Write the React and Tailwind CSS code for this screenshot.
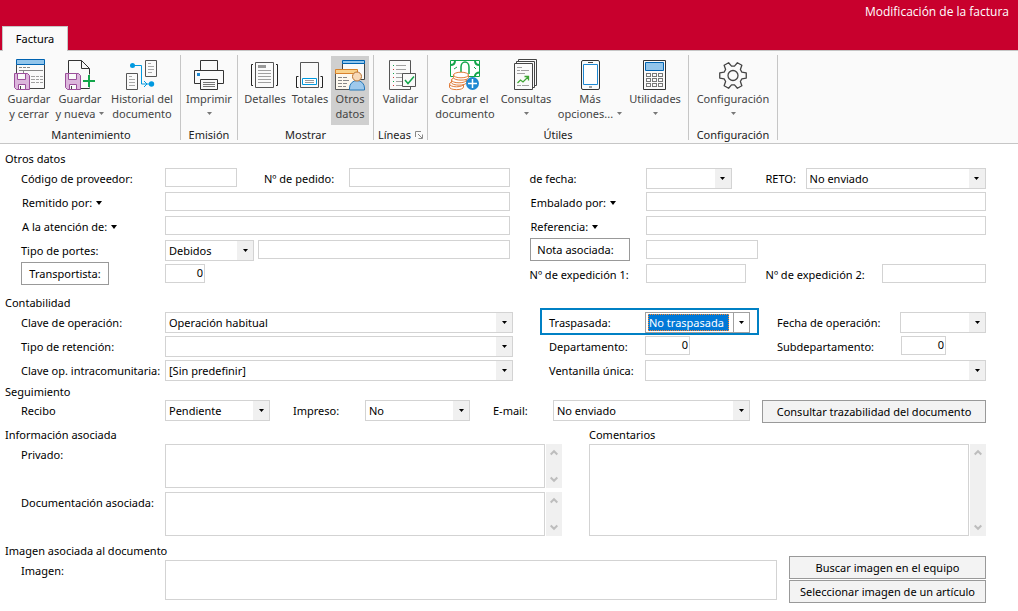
import { clsx } from 'clsx';

const FIELD = 'border border-[#d3d3d3] bg-white outline-none min-w-0';

/* ---------- Ribbon icons ---------- */

const Icon = ({ children }) => (
  <svg viewBox="0 0 32 32" fill="none" className="w-8 h-8 shrink-0" aria-hidden="true">
    {children}
  </svg>
);

const Floppy = () => (
  <>
    <path d="M1.5 14.5h13l2 2v14h-13l-2-2z" fill="#dcb6dc" stroke="#9b4f9b" />
    <path d="M4.5 14.5h8v6h-8z" fill="#fafafa" stroke="#9b4f9b" />
    <path d="M5.5 25.5h7v5h-7z" fill="#fafafa" stroke="#9b4f9b" />
    <path d="M7.5 27v3" stroke="#444" />
  </>
);

const SaveCloseIcon = () => (
  <Icon>
    <path d="M3.500 5.500h28v24h-28z" fill="#fafafa" stroke="#444" />
    <path d="M3.500 .5h28v5h-28z" fill="#92c5eb" stroke="#0063b1" />
    <path d="M6 8.500h3m1 0h3m1 0h3M6 11.500h24M10.500 12v3" stroke="#888" />
    <path d="M18 17.500h4m1 0h3m1 0h3M18 20.500h4m1 0h3m1 0h3M18 23.500h4m1 0h3m1 0h3" stroke="#a0a0a0" />
    <Floppy />
  </Icon>
);

const SaveNewIcon = () => (
  <Icon>
    <path d="M4.500 29.500v-28h13l8 8v20z" fill="#fafafa" stroke="#333" />
    <path d="M17.500 1.500v8h8" stroke="#333" />
    <Floppy />
    <path d="M25 15.500v13M18.500 22h13" stroke="#fafafa" strokeWidth="4" />
    <path d="M25 16v12M19 22h12" stroke="#12a54a" strokeWidth="2" />
  </Icon>
);

const HistoryIcon = () => (
  <Icon>
    <path d="M19.500 1.500h11v16h-11zM.5 14.500h11v16h-11z" fill="#fafafa" stroke="#555" />
    <path d="M22 4.500h3m-3 3h6m-6 3h6m-6 3h4M3 17.500h3m-3 3h6m-6 3h6m-6 3h6" stroke="#a8a8a8" />
    <path d="M6 6.500h9.500v18.500H20m-2-3l3 3-3 3M21 25h4" stroke="#0099e0" />
    <circle cx="6.500" cy="6.500" r="2.500" fill="#0099e0" />
    <circle cx="25.500" cy="25" r="2.700" fill="#0099e0" />
  </Icon>
);

const PrintIcon = () => (
  <Icon>
    <path d="M7.500 1.500h17v10h-17z" fill="#fafafa" stroke="#333" />
    <path d="M1.500 11.500h29v13h-29z" fill="#fafafa" stroke="#333" />
    <path d="M7.500 20.500h17v10h-17z" fill="#fafafa" stroke="#333" />
    <path d="M10 23.500h12m-12 2h12m-12 2h12" stroke="#777" />
    <path d="M4 14h3v3H4z" fill="#1e88d2" />
  </Icon>
);

const DetailsIcon = () => (
  <Icon>
    <path d="M6.500 3.500h18v25h-18z" fill="#fafafa" stroke="#555" />
    <path d="M4 5.500H2.500v21H4M27 5.500h1.500v21H27" stroke="#222" />
    <path d="M9 6h8v3H9z" fill="#999" />
    <path d="M9 11.500h13m-13 3h13m-13 3h13m-13 3h13m-13 3h13" stroke="#a0a0a0" />
  </Icon>
);

const TotalsIcon = () => (
  <Icon>
    <path d="M6.500 3.500h18v25h-18z" fill="#fafafa" stroke="#555" />
    <path d="M4.500 17.500h-2v11h2M26.500 17.500h2v11h-2" stroke="#222" />
    <path d="M8.500 19.500h14v6h-14z" fill="#fff" stroke="#0099e0" />
    <path d="M11 21.500h9m-9 2h9" stroke="#999" />
  </Icon>
);

const OtherDataIcon = () => (
  <Icon>
    <path d="M8.500 4.500h22v16h-22z" fill="#fafafa" stroke="#444" />
    <path d="M8.500 1.500h22v3h-22z" fill="#92c5eb" stroke="#0063b1" />
    <path d="M1.500 14.500h22v16h-22z" fill="#fdf8ee" stroke="#555" />
    <path d="M1.500 10.500h22v4h-22z" fill="#f9d28b" stroke="#d9822b" />
    <path d="M4 18.500h4m1 0h4m-9 3h4m1 0h6m-11 3h4m1 0h4m-9 3h4m1 0h3" stroke="#888" />
    <path d="M15.500 31v-2a7.500 7.500 0 0 1 15 0v2z" fill="#9ec9ec" stroke="#2778b8" />
    <circle cx="23" cy="17.500" r="4.500" fill="#f7d9b8" stroke="#b87333" />
  </Icon>
);

const ValidateIcon = () => (
  <Icon>
    <path d="M4.500 1.500h21v29h-21z" fill="#fafafa" stroke="#555" />
    <path d="M11 6.500h10m-10 4h10m-10 4h10m-10 4h6m-6 4h6m-6 4h6" stroke="#a0a0a0" />
    <path d="M8 6.500h1m-1 8h1m-1 8h1" stroke="#12a54a" />
    <path d="M8 10.500h1m-1 8h1m-1 8h1" stroke="#d13438" />
    <path d="M17.500 14.500h13v13h-13z" fill="#fafafa" stroke="#555" />
    <path d="M20 21l3 3.500 6-7" stroke="#12a54a" strokeWidth="1.500" />
  </Icon>
);

const CollectIcon = () => (
  <Icon>
    <path d="M1.500 1.500h29v16h-29z" fill="#fff" stroke="#12a54a" />
    <path d="M1.500 6c3 0 4.500-2 4.500-4.500M30.500 6C28 6 26 4.500 26 1.500M26 17c0-2 2-3.500 4.500-3.500" stroke="#12a54a" strokeWidth="2" />
    <path d="M12 13V8a4 5 0 0 1 8 0v7" stroke="#12a54a" strokeWidth="1.500" />
    <path d="M5 10l3-2M25 8l2 2" stroke="#12a54a" />
    <g fill="#fff" stroke="#e07b39">
      <path d="M.5 25.500v2.500c0 3.500 14 3.500 14 0v-2.500z" />
      <ellipse cx="7.500" cy="25" rx="7" ry="2.800" />
      <path d="M2.500 21v2.500c0 3.500 15 3.500 15 0V21z" />
      <ellipse cx="10" cy="21" rx="7.500" ry="2.800" />
      <path d="M4.500 16v2.500c0 3.500 15 3.500 15 0V16z" />
      <ellipse cx="12" cy="16" rx="7.500" ry="2.800" />
    </g>
    <circle cx="23.500" cy="24.500" r="6.500" fill="#1e88d2" />
    <path d="M23.500 20v9M19 24.500h9" stroke="#fff" strokeWidth="1.500" />
  </Icon>
);

const QueriesIcon = () => (
  <Icon>
    <path d="M8.500 .5h18v26h-18z" fill="#fafafa" stroke="#444" />
    <path d="M6.500 2.500h18v26h-18z" fill="#fafafa" stroke="#444" />
    <path d="M4.500 4.500h18v26h-18z" fill="#fafafa" stroke="#444" />
    <path d="M7 8.500h5m-5 3h3m1 0h8m-12 3h8m-8 12h4m1 0h7" stroke="#a0a0a0" />
    <path d="M7.500 24l3-3 2.500 2 5-5M14.500 17.500h4v4" stroke="#3fa535" strokeWidth="1.300" />
  </Icon>
);

const MoreIcon = () => (
  <Icon>
    <rect x="7.500" y="1.500" width="18" height="29" rx="1.500" fill="#fafafa" stroke="#333" />
    <path d="M9.500 5.500h14v20h-14z" fill="#fff" stroke="#1e88d2" />
    <path d="M14 3.500h5M15 28h3" stroke="#444" />
  </Icon>
);

const CalculatorIcon = () => (
  <Icon>
    <path d="M4.500 1.500h22v29h-22z" fill="#fafafa" stroke="#333" />
    <path d="M6.500 3.500h18v8h-18z" fill="#92c5eb" stroke="#0063b1" />
    {[7.5, 13.5, 19.5].map((x) =>
      [14.5, 19.5, 24.5].map((y) => (
        <rect key={`${x}-${y}`} x={x} y={y} width="4" height="3" stroke="#777" />
      ))
    )}
  </Icon>
);

// six-toothed gear, one tooth every 60 degrees
const gearPoints = [0, 60, 120, 180, 240, 300]
  .flatMap((angle) => [
    [angle - 21, 9.5],
    [angle - 11, 13.5],
    [angle + 11, 13.5],
    [angle + 21, 9.5],
  ])
  .map(([deg, r]) => {
    const rad = (deg * Math.PI) / 180;
    return `${(16 + r * Math.cos(rad)).toFixed(2)},${(16.5 + r * Math.sin(rad)).toFixed(2)}`;
  })
  .join(' ');

const GearIcon = () => (
  <Icon>
    <polygon points={gearPoints} stroke="#444" strokeWidth="1.300" strokeLinejoin="round" />
    <circle cx="16" cy="16.500" r="5" stroke="#444" strokeWidth="1.300" />
  </Icon>
);

const Caret = ({ className }) => (
  <svg viewBox="0 0 5 3" className={clsx('w-[5px] h-[3px] inline-block shrink-0', className)} aria-hidden="true">
    <path d="M0 0h5L2.500 3z" fill="currentColor" />
  </svg>
);

/* ---------- Ribbon ---------- */

const RibbonButton = ({ icon: IconComponent, lines, caret, active, className }) => (
  <button
    type="button"
    className={clsx(
      'flex flex-col items-center h-[69px] pt-[3px] text-[#444] leading-[15px] whitespace-nowrap',
      active && 'bg-[#cfcfcf]',
      className
    )}
  >
    <IconComponent />
    <span>{lines[0]}</span>
    <span className="flex items-center h-[15px]">
      {lines[1]}
      {caret && <Caret className={clsx('text-[#777]', lines[1] && 'ml-1')} />}
    </span>
  </button>
);

const RibbonGroup = ({ title, launcher, className, children }) => (
  <section className="flex flex-col justify-between h-[85px] border-r border-[#c6c6c6]">
    <div className={clsx('flex pt-px', className)}>{children}</div>
    <h2 className="flex items-center justify-center leading-[10px] h-[10px] gap-1 text-[#222]">
      {title}
      {launcher && (
        <button type="button" aria-label={`Opciones de ${title}`}>
          <svg viewBox="0 0 8 8" fill="none" className="w-2 h-2" stroke="#888">
            <path d="M.5 6V.5H6M3 3l4 4M7.500 3.500v4h-4" />
          </svg>
        </button>
      )}
    </h2>
  </section>
);

const Ribbon = () => (
  <nav className="flex h-[94px] border-y border-[#c6c6c6] bg-[#fafafa] pt-1 pl-[2px]">
    <RibbonGroup title="Mantenimiento">
      <RibbonButton icon={SaveCloseIcon} lines={['Guardar', 'y cerrar']} className="w-[54px]" />
      <RibbonButton icon={SaveNewIcon} lines={['Guardar', 'y nueva']} caret className="w-12" />
      <RibbonButton icon={HistoryIcon} lines={['Historial del', 'documento']} className="w-[76px]" />
    </RibbonGroup>
    <RibbonGroup title="Emisión">
      <RibbonButton icon={PrintIcon} lines={['Imprimir']} caret className="w-14" />
    </RibbonGroup>
    <RibbonGroup title="Mostrar" className="pl-[3px] pr-1">
      <RibbonButton icon={DetailsIcon} lines={['Detalles']} className="w-12" />
      <RibbonButton icon={TotalsIcon} lines={['Totales']} className="w-[42px]" />
      <RibbonButton icon={OtherDataIcon} lines={['Otros', 'datos']} active className="w-[38px]" />
    </RibbonGroup>
    <RibbonGroup title="Líneas" launcher>
      <RibbonButton icon={ValidateIcon} lines={['Validar']} className="w-[53px]" />
    </RibbonGroup>
    <RibbonGroup title="Útiles" className="pr-2">
      <RibbonButton icon={CollectIcon} lines={['Cobrar el', 'documento']} className="w-[74px]" />
      <RibbonButton icon={QueriesIcon} lines={['Consultas']} caret className="w-12" />
      <RibbonButton icon={MoreIcon} lines={['Más', 'opciones...']} caret className="w-20" />
      <RibbonButton icon={CalculatorIcon} lines={['Utilidades']} caret className="w-[50px]" />
    </RibbonGroup>
    <RibbonGroup title="Configuración">
      <RibbonButton icon={GearIcon} lines={['Configuración']} caret className="w-[88px]" />
    </RibbonGroup>
  </nav>
);

/* ---------- Form controls ---------- */

const Row = ({ className, children }) => <div className={clsx('flex items-start h-6', className)}>{children}</div>;

const Label = ({ htmlFor, className, children }) => (
  <label htmlFor={htmlFor} className={clsx('leading-[22px] shrink-0 whitespace-nowrap', className)}>
    {children}
  </label>
);

const MenuLabel = ({ className, children }) => (
  <button type="button" className={clsx('flex items-center shrink-0 leading-[22px] pl-px whitespace-nowrap', className)}>
    {children}
    <svg viewBox="0 0 6 4" className="w-[6px] h-1 ml-1" aria-hidden="true">
      <path d="M0 0h6L3 4z" fill="currentColor" />
    </svg>
  </button>
);

const Input = ({ className, ...props }) => (
  <input type="text" className={clsx(FIELD, 'h-[19px] leading-[15px]', className)} {...props} />
);

const NumberInput = ({ className, ...props }) => (
  <Input inputMode="numeric" defaultValue="0" className={clsx('text-right pr-px pb-[2px]', className)} {...props} />
);

const Select = ({ id, value = '', className }) => (
  <div className={clsx('relative h-[21px] min-w-0', className)}>
    <select id={id} className={clsx(FIELD, 'block w-full h-full appearance-none pt-px pl-[3px] pr-4')}>
      <option>{value}</option>
    </select>
    <span className="absolute right-px inset-y-px w-4 bg-[#f0f0f0] flex items-center justify-center pointer-events-none">
      <Caret />
    </span>
  </div>
);

const FocusedSelect = ({ id, value }) => (
  <div className="relative w-[105px] h-[21px] border border-[#a0a0a0] bg-white py-px pl-[2px] pr-5">
    <select
      id={id}
      className="block w-full h-full leading-[15px] appearance-none bg-[#0078d7] text-white border border-dotted border-[#ff8728] outline-none"
    >
      <option>{value}</option>
    </select>
    <span className="absolute right-0 inset-y-0 w-4 border-l border-[#a0a0a0] flex items-center justify-center pointer-events-none">
      <Caret />
    </span>
  </div>
);

const Button = ({ className, children }) => (
  <button type="button" className={clsx('h-[23px] pt-px border border-[#999] text-center whitespace-nowrap', className)}>
    {children}
  </button>
);

const TextArea = ({ id, className }) => (
  <div className={clsx('flex gap-px', className)}>
    <textarea id={id} className={clsx(FIELD, 'flex-1 h-full resize-none px-1')} />
    <div className="w-4 bg-[#f0f0f0] flex flex-col items-center justify-between py-[5px] text-[#bdbdbd]" aria-hidden="true">
      <svg viewBox="0 0 8 7" fill="none" stroke="currentColor" strokeWidth="2" className="w-2 h-[7px]">
        <path d="M.7 5.500L4 2.200l3.300 3.300" />
      </svg>
      <svg viewBox="0 0 8 7" fill="none" stroke="currentColor" strokeWidth="2" className="w-2 h-[7px]">
        <path d="M.7 1.500L4 4.800l3.300-3.300" />
      </svg>
    </div>
  </div>
);

const Heading = ({ className, children }) => (
  <h2 className={clsx('-ml-4 leading-4 h-4', className)}>{children}</h2>
);

/* ---------- Sections ---------- */

const OtherData = () => (
  <section>
    <Heading className="mb-px">Otros datos</Heading>
    <div className="grid grid-cols-[488fr_456fr] gap-x-5 *:min-w-0">
      <div>
        <Row>
          <Label htmlFor="proveedor" className="w-36">Código de proveedor:</Label>
          <Input id="proveedor" className="w-[72px]" />
          <Label htmlFor="pedido" className="w-[85px] ml-[27px]">Nº de pedido:</Label>
          <Input id="pedido" className="flex-1" />
        </Row>
        <Row>
          <MenuLabel className="w-36">Remitido por:</MenuLabel>
          <Input aria-label="Remitido por" className="flex-1" />
        </Row>
        <Row>
          <MenuLabel className="w-36">A la atención de:</MenuLabel>
          <Input aria-label="A la atención de" className="flex-1" />
        </Row>
        <Row>
          <Label htmlFor="portes" className="w-36">Tipo de portes:</Label>
          <Select id="portes" value="Debidos" className="w-[89px] mr-1" />
          <Input aria-label="Descripción de portes" className="flex-1" />
        </Row>
        <Row>
          <div className="w-36 -mt-[2px]">
            <Button className="w-[88px]">Transportista:</Button>
          </div>
          <NumberInput aria-label="Transportista" className="w-10" />
        </Row>
      </div>
      <div>
        <Row>
          <Label htmlFor="fecha" className="w-[116px]">de fecha:</Label>
          <Select id="fecha" className="w-[86px]" />
          <Label htmlFor="reto" className="w-10 ml-[34px]">RETO:</Label>
          <Select id="reto" value="No enviado" className="flex-1" />
        </Row>
        <Row>
          <MenuLabel className="w-[116px]">Embalado por:</MenuLabel>
          <Input aria-label="Embalado por" className="flex-1" />
        </Row>
        <Row>
          <MenuLabel className="w-[116px]">Referencia:</MenuLabel>
          <Input aria-label="Referencia" className="flex-1" />
        </Row>
        <Row>
          <div className="w-[116px] -mt-[2px]">
            <Button className="w-[100px] pr-2">Nota asociada:</Button>
          </div>
          <Input aria-label="Nota asociada" className="w-28" />
        </Row>
        <Row>
          <Label htmlFor="exp1" className="w-[116px]">Nº de expedición 1:</Label>
          <Input id="exp1" className="w-[100px]" />
          <Label htmlFor="exp2" className="w-[116px] ml-5">Nº de expedición 2:</Label>
          <Input id="exp2" className="flex-1" />
        </Row>
      </div>
    </div>
  </section>
);

const Accounting = () => (
  <section className="mt-[7px]">
    <Heading className="mb-px">Contabilidad</Heading>
    <div className="grid grid-cols-[492fr_446fr] gap-x-[27px] *:min-w-0">
      <div>
        <Row>
          <Label htmlFor="clave" className="w-36">Clave de operación:</Label>
          <Select id="clave" value="Operación habitual" className="flex-1" />
        </Row>
        <Row>
          <Label htmlFor="retencion" className="w-36">Tipo de retención:</Label>
          <Select id="retencion" className="flex-1" />
        </Row>
        <Row>
          <Label htmlFor="intra" className="w-36">Clave op. intracomunitaria:</Label>
          <Select id="intra" value="[Sin predefinir]" className="flex-1" />
        </Row>
      </div>
      <div>
        <Row>
          <div className="flex w-[219px] h-[27px] -mt-1 border-2 border-[#0080c4] pt-[2px] pl-[7px]">
            <Label htmlFor="traspasada" className="w-24">Traspasada:</Label>
            <FocusedSelect id="traspasada" value="No traspasada" />
          </div>
          <Label htmlFor="fechaop" className="w-[123px] ml-[18px]">Fecha de operación:</Label>
          <Select id="fechaop" className="flex-1" />
        </Row>
        <Row className="pl-[9px]">
          <Label htmlFor="dep" className="w-24">Departamento:</Label>
          <NumberInput id="dep" className="w-[45px]" />
          <Label htmlFor="subdep" className="w-[124px] ml-[87px]">Subdepartamento:</Label>
          <NumberInput id="subdep" className="w-[45px]" />
        </Row>
        <Row className="pl-[9px]">
          <Label htmlFor="ventanilla" className="w-24">Ventanilla única:</Label>
          <Select id="ventanilla" className="flex-1" />
        </Row>
      </div>
    </div>
  </section>
);

const Tracking = () => (
  <section>
    <Heading>Seguimiento</Heading>
    <Row>
      <Label htmlFor="recibo" className="w-36">Recibo</Label>
      <Select id="recibo" value="Pendiente" className="w-[105px]" />
      <Label htmlFor="impreso" className="w-[72px] ml-[23px]">Impreso:</Label>
      <Select id="impreso" value="No" className="w-[105px]" />
      <Label htmlFor="email" className="w-[60px] ml-[23px]">E-mail:</Label>
      <Select id="email" value="No enviado" className="flex-1" />
      <Button className="w-56 ml-3 bg-[#f3f3f3]">Consultar trazabilidad del documento</Button>
    </Row>
  </section>
);

const RelatedInfo = () => (
  <section className="mt-[3px] grid grid-cols-[541fr_397fr] gap-x-[27px] *:min-w-0">
    <div>
      <Heading className="mb-px">Información asociada</Heading>
      <div className="flex mb-1">
        <Label htmlFor="privado" className="w-36">Privado:</Label>
        <TextArea id="privado" className="flex-1 h-11" />
      </div>
      <div className="flex">
        <Label htmlFor="documentacion" className="w-36">Documentación asociada:</Label>
        <TextArea id="documentacion" className="flex-1 h-11" />
      </div>
    </div>
    <div>
      <label htmlFor="comentarios" className="block leading-4 h-4 mb-px">Comentarios</label>
      <TextArea id="comentarios" className="h-[92px]" />
    </div>
  </section>
);

const RelatedImage = () => (
  <section className="mt-[7px] flex gap-3">
    <div className="flex-1">
      <Heading className="mb-px">Imagen asociada al documento</Heading>
      <div className="flex">
        <span className="w-36 leading-[22px]">Imagen:</span>
        <div role="img" aria-label="Imagen" className="flex-1 h-10 border border-[#d3d3d3]" />
      </div>
    </div>
    <div className="flex flex-col gap-px w-[197px] pt-[13px]">
      <Button className="bg-[#f3f3f3]">Buscar imagen en el equipo</Button>
      <Button className="bg-[#f3f3f3]">Seleccionar imagen de un artículo</Button>
    </div>
  </section>
);

const App = () => (
  <div className="min-h-screen bg-white text-black text-[11px] font-['Noto_Sans',sans-serif]">
    <header className="bg-[#c8002d] h-[50px] flex flex-col justify-between">
      <h1 className="text-right text-white text-xs leading-6 pr-[9px] font-['Open_Sans',sans-serif]">
        Modificación de la factura
      </h1>
      <div className="flex pl-[2px]">
        <button type="button" className="relative w-[66px] h-[25px] -mb-px bg-[#fafafa] border border-b-0 border-[#c6c6c6]">
          Factura
        </button>
      </div>
    </header>
    <Ribbon />
    <main className="pl-[21px] pr-8 pt-[7px]">
      <OtherData />
      <Accounting />
      <Tracking />
      <RelatedInfo />
      <RelatedImage />
    </main>
  </div>
);

export default App;
